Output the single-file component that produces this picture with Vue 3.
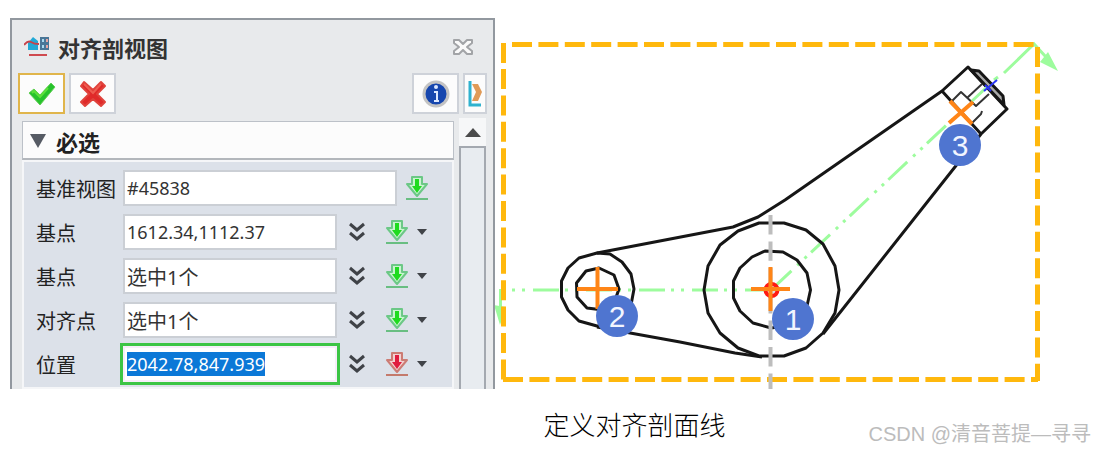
<script setup>
import { ref, onMounted } from 'vue'

const open = ref(true)
const activeId = ref('position')

const fields = ref([
  { id: 'view', label: '基准视图', value: '#45838', more: false },
  { id: 'base1', label: '基点', value: '1612.34,1112.37', more: true },
  { id: 'base2', label: '基点', value: '选中1个', more: true, cjk: true },
  { id: 'align', label: '对齐点', value: '选中1个', more: true, cjk: true },
  { id: 'position', label: '位置', value: '2042.78,847.939', more: true, pending: true },
])

const badges = [
  { n: 1, x: 793, y: 319 },
  { n: 2, x: 617, y: 316 },
  { n: 3, x: 960, y: 145 },
]

onMounted(() => {
  const el = document.getElementById(activeId.value)
  el.focus()
  el.select()
})
</script>

<template>
  <main class="page">
    <div class="figure">
      <section class="panel">
        <header class="title-bar">
          <svg class="title-icon" width="26" height="22" viewBox="0 0 26 22">
            <path d="M4 7 L9 1 L14 5 V14 H4Z" fill="#22a9d6" />
            <path d="M0 9 Q4 4 7 6 T15 8" fill="none" stroke="#c5434b" stroke-width="2" />
            <rect x="16" y="1" width="9" height="13" fill="#4a7697" />
            <path d="M18 3h2v3h-2zM18 9h2v3h-2z" fill="#a9d9ef" />
            <path d="M22 3h2v3h-2zM22 9h2v3h-2z" fill="#e8a5a2" />
            <path d="M5 19 H23" stroke="#cf4b50" stroke-width="2" />
          </svg>
          <h1>对齐剖视图</h1>
          <button class="close" aria-label="关闭">
            <svg width="22" height="18" viewBox="0 0 22 18">
              <path d="M2 2 H7 L11 6 L15 2 H20 V5 L15 9 L20 13 V16 H15 L11 12 L7 16 H2 V13 L7 9 L2 5Z" fill="#fafafa" stroke="#a2a4a7" stroke-width="2" stroke-linejoin="round" />
            </svg>
          </button>
        </header>

        <div class="toolbar">
          <button class="tool ok" aria-label="确定">
            <svg width="28" height="24" viewBox="0 0 28 24">
              <path d="M1 11 L6 7 L12 13 L23 1 L27 5 L12 23Z" fill="#26c22c" stroke="#62cf55" stroke-linejoin="round" />
              <path d="M4 11 L6 9 L12 15 L20 6" fill="none" stroke="#5ce03a" stroke-width="2" />
            </svg>
          </button>
          <button class="tool" aria-label="取消">
            <svg width="30" height="30" viewBox="0 0 30 30">
              <path d="M6 3 L15 11 L23 3 L27 7 L19 15 L27 23 L23 27 L15 20 L7 27 L3 23 L11 15 L3 7Z" fill="#e02a2a" stroke="#e0433c" stroke-width="2" stroke-linejoin="round" />
              <path d="M6 5 L15 14 L23 5" fill="none" stroke="#ee5c50" stroke-width="2" />
            </svg>
          </button>
          <span class="spacer"></span>
          <button class="tool" aria-label="信息">
            <svg width="28" height="28" viewBox="0 0 28 28">
              <circle cx="14" cy="14" r="12" fill="#1646ae" stroke="#c3c3c3" stroke-width="3" />
              <circle cx="14" cy="7" r="2" fill="#dce8ff" />
              <path d="M12 12h3v9M12 21h5" fill="none" stroke="#dce8ff" stroke-width="2" />
            </svg>
          </button>
          <button class="tool half" aria-label="预览">
            <svg width="14" height="28" viewBox="0 0 14 28">
              <path d="M2 1V25H13" fill="none" stroke="#2fb2cf" stroke-width="3" />
              <path d="M4 4h6l4 8-4 9H4l4-9Z" fill="#e09a57" />
            </svg>
          </button>
        </div>

        <div class="content">
          <div class="group">
            <button class="group-head" :aria-expanded="open" @click="open = !open">
              <svg width="16" height="14" viewBox="0 0 16 14"><path d="M0 0H16L8 14Z" fill="#565b64" /></svg>
              必选
            </button>
            <div v-show="open" class="rows">
              <div v-for="f in fields" :key="f.id" class="row">
                <label :for="f.id">{{ f.label }}</label>
                <input
                  :id="f.id"
                  v-model="f.value"
                  type="text"
                  :class="{ cjk: f.cjk, active: f.id === activeId }"
                  @focus="activeId = f.id"
                />
                <button v-if="f.more" class="icon-btn" aria-label="展开">
                  <svg width="18" height="20" viewBox="0 0 18 20">
                    <path d="M2 2L9 8L16 2M2 11L9 17L16 11" fill="none" stroke="#3f4247" stroke-width="3" />
                  </svg>
                </button>
                <button class="icon-btn pick" :class="{ pending: f.pending }" aria-label="拾取">
                  <svg width="24" height="26" viewBox="0 0 24 26">
                    <path class="halo" d="M7 2H17V9H22L12 21L2 9H7Z" stroke-width="2" stroke-linejoin="round" />
                    <path class="core" d="M10 4H14V11H17L12 18L7 11H10Z" />
                    <path class="base" d="M1 24H23" stroke-width="2" />
                  </svg>
                </button>
                <button v-if="f.more" class="drop" aria-label="选项">
                  <svg width="10" height="6" viewBox="0 0 10 6"><path d="M0 0H10L5 6Z" fill="#404348" /></svg>
                </button>
              </div>
            </div>
          </div>
          <div class="scrollbar">
            <button class="scroll-up" aria-label="向上滚动">
              <svg width="16" height="9" viewBox="0 0 16 9"><path d="M0 9H16L8 0Z" fill="#4b4b4b" /></svg>
            </button>
            <div class="thumb"></div>
          </div>
        </div>
      </section>

      <svg class="drawing" viewBox="495 18 600 371" role="img" aria-label="对齐剖面线示意图">
        <!-- section line -->
        <g class="axis">
          <path d="M771 290H503" stroke-dasharray="26 8 3 7 3 6" />
          <path d="M771 290L953 119" stroke-dasharray="26 8 3 7 3 6" stroke-dashoffset="-2" />
          <path d="M1004 73L1034 44L1046 57M500.5 289V310" />
          <path class="head" d="M1040 62L1048 52L1058 71ZM494 305L506 307L500 325Z" />
        </g>

        <!-- part outline -->
        <g class="part">
          <path d="M704 290L708 266L720 245L738 231L759 223H784L806 230L823 244L835 266L839 290L835 313L823 333L806 348L784 356H759L738 348L720 333L708 313Z" />
          <path d="M733.5 281L740 268L752 257L765 251L783 252L797 260L807 273L810.5 290L807 306L797 319L785 326L771 328L753 323L740 311L733.5 298Z" />
          <path d="M561.5 281L568 268L579 258L597 253L610 254L622 262L631 274L634 289L631 305L622 317L610 325L597 326L579 321L568 310L561.5 297Z" />
          <path d="M576.5 283L586 271L599 268L614 275L619 289L614 303L603 310L587 308L577 297Z" />
          <path d="M597 253L733 227L758 217L785 200L942 91L968 67L1007 109L981 134M823 334L981 134" />
          <path d="M942 91L981 134M597 327L680 342L735 353L762 357" />
          <path class="cap" d="M971 70L979 71L1003 96L1004 105Z" />
          <path class="thin" d="M952 101L961 92L976 106L989 94M967 98L982 84M971 124L981 114L982 111" />
        </g>

        <path d="M972 101L987 87M994 80L998 77" class="axis" />
        <path d="M984 91L997 80M985 85L991 91" stroke="#2a35f5" stroke-width="2" />

        <!-- selection frame -->
        <g class="frame">
          <path d="M512 44.5H1036" stroke-dasharray="20 6.4" />
          <path d="M503.5 43V63M503.5 69V381" stroke-dasharray="20 6.4" />
          <path d="M1037.5 47V381" stroke-dasharray="20 6.4" />
          <path d="M503 379.5H1038" stroke-dasharray="20 6.4" />
        </g>
        <path d="M770.5 215V389" stroke="#bdbdbd" stroke-width="4" stroke-dasharray="19.4 7" />

        <!-- picked points -->
        <circle cx="771.5" cy="290" r="6" fill="#ddd" stroke="#ff1a12" stroke-width="4" />
        <g class="mark">
          <path d="M751 289H790M770.5 267V311" />
          <path d="M577 289H618M597.5 267V309" />
          <path d="M949 123L973 102M950 101L972 124" />
        </g>
        <g v-for="b in badges" :key="b.n" class="badge">
          <circle :cx="b.x" :cy="b.y" r="21" />
          <text :x="b.x" :y="b.y + 11">{{ b.n }}</text>
        </g>
      </svg>
    </div>

    <footer class="foot">
      <p class="caption">定义对齐剖面线</p>
      <p class="watermark">CSDN @清音菩提—寻寻</p>
    </footer>
  </main>
</template>

<style>
body {
  margin: 0;
  background: #fff;
}
</style>

<style scoped>
.page {
  padding-top: 18px;
  font-family: "Noto Sans", "Noto Sans CJK SC", sans-serif;
  color: #222;
}

svg {
  display: block;
}

button {
  display: flex;
  align-items: center;
  justify-content: center;
  padding: 0;
  border: 0;
  background: none;
  font-family: inherit;
  color: inherit;
  cursor: pointer;
}

.figure {
  display: grid;
  grid-template-columns: minmax(0, 485fr) minmax(0, 600fr);
  align-items: start;
  padding-left: 10px;
}

.panel {
  border: 2px solid #92989f;
  border-bottom: 0;
  background: #e8eaec;
}

/* title */
.title-bar {
  display: flex;
  align-items: center;
  height: 53px;
  padding: 0 19px 0 12px;
}

.title-bar h1 {
  flex: 1;
  margin: 0 0 0 8px;
  font-family: "Noto Sans CJK SC", sans-serif;
  font-size: 22px;
  line-height: 32px;
  font-weight: 700;
  color: #333;
}

.close {
  width: 22px;
  height: 24px;
}

/* toolbar */
.toolbar {
  display: flex;
  gap: 4px;
  padding: 0 6px;
}

.tool {
  width: 47px;
  height: 41px;
  border: 2px solid #ced2d9;
  background: #fcfcfc;
}

.tool.ok {
  border-color: #e0b54b;
}

.tool.half {
  width: 24px;
}

.spacer {
  flex: 1;
}

/* content */
.content {
  display: flex;
  gap: 5px;
  padding: 4px 7px 0 10px;
}

.group {
  flex: 1;
  min-width: 0;
  padding-top: 3px;
}

.group-head {
  justify-content: flex-start;
  gap: 10px;
  width: 100%;
  height: 39px;
  padding: 2px 0 0 7px;
  border: 1px solid #bcc1c8;
  border-bottom: 2px solid #b3b7bc;
  background: #fcfcfc;
  font-family: "Noto Sans CJK SC", sans-serif;
  font-size: 22px;
  font-weight: 700;
}

.rows {
  padding: 4px 15px 1px 12px;
  border: 2px solid #f5f6f8;
  background: #dce1e9;
}

.row {
  display: flex;
  align-items: center;
  height: 44px;
}

.row label {
  flex: 0 0 87px;
  font-family: "Noto Sans CJK SC", sans-serif;
  font-size: 20px;
  white-space: nowrap;
}

.row input {
  flex: 1;
  min-width: 0;
  height: 36px;
  box-sizing: border-box;
  padding: 0 2px;
  border: 2px solid #cbcfd5;
  border-radius: 0;
  outline: 0;
  background: #fff;
  font-family: inherit;
  font-size: 18px;
  color: #333;
}

.row input.cjk {
  font-size: 20px;
}

.row input.active {
  border-color: #f7eefa;
  outline: 3px solid #3cc545;
}

.row input::selection {
  background: #0b78d7;
  color: #fff;
}

.icon-btn {
  flex: 0 0 40px;
  height: 36px;
}

.halo {
  fill: #c9f5cf;
  stroke: #6cc886;
}

.core {
  fill: #1fdb1f;
}

.base {
  stroke: #69be82;
}

.pending .halo {
  fill: #f3d0d0;
  stroke: #cc7c74;
}

.pending .core {
  fill: #e01c3e;
}

.pending .base {
  stroke: #c47a6c;
}

.drop {
  flex: 0 0 20px;
  justify-content: flex-start;
  height: 36px;
}

/* scrollbar */
.scrollbar {
  display: flex;
  flex-direction: column;
  flex: 0 0 27px;
}

.scroll-up {
  height: 28px;
  background: #f6f7f8;
}

.thumb {
  flex: 1;
  border: 2px solid #a4a9b0;
  border-bottom: 0;
  background: #e8ecf0;
}

/* drawing */
.drawing {
  width: 100%;
  height: auto;
  fill: none;
}

.axis {
  stroke: #9dfc9d;
  stroke-width: 3;
}

.axis .head {
  fill: #9dfc9d;
  stroke: none;
}

.part {
  stroke: #161616;
  stroke-width: 3;
  stroke-linejoin: round;
}

.part .cap {
  fill: #aaa;
}

.part .thin {
  stroke: #333;
  stroke-width: 2;
}

.frame {
  stroke: #ffb80d;
  stroke-width: 5;
}

.mark {
  stroke: #ff8517;
  stroke-width: 4;
}

.badge circle {
  fill: #4f75d0;
}

.badge text {
  fill: #f2f5ff;
  font-family: "Liberation Sans", Arial, sans-serif;
  font-size: 30px;
  text-anchor: middle;
}

/* footer */
.foot {
  display: grid;
  grid-template-columns: 1fr auto 1fr;
  padding: 15px 4px 0 178px;
}

.foot p {
  margin: 0;
  white-space: nowrap;
}

.caption {
  grid-column: 2;
  font-family: "Noto Sans CJK SC", sans-serif;
  font-size: 26px;
  line-height: 40px;
  font-weight: 300;
  color: #000;
}

.watermark {
  justify-self: end;
  padding-top: 16px;
  font-family: "Liberation Sans", "Noto Sans CJK SC", sans-serif;
  font-size: 20px;
  line-height: 28px;
  color: #bcbcbc;
}
</style>
